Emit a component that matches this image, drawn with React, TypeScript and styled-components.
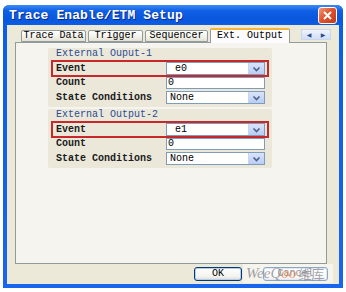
import React from "react";
import styled, { createGlobalStyle } from "styled-components";

const Global = createGlobalStyle`
  html, body { margin: 0; padding: 0; background: #ffffff; }
  body { width: 346px; height: 292px; overflow: hidden; font-family: "Liberation Mono", "Courier New", monospace; }
`;

const Page = styled.div`
  width: 346px;
  height: 292px;
  padding: 5px 3px 4px 3px;
  box-sizing: border-box;
  position: relative;
`;

const Window = styled.div`
  width: 340px;
  height: 283px;
  display: flex;
  flex-direction: column;
  background: linear-gradient(180deg, #0a5ee6 0%, #1866ec 100%);
  border-radius: 6px 6px 0 0;
  box-sizing: border-box;
  padding: 0 4px 4px 4px;
`;

const TitleBar = styled.div`
  height: 20px;
  display: flex;
  align-items: center;
  justify-content: space-between;
  padding: 0 2px 0 2px;
  background: linear-gradient(180deg, #3b8cf6 0%, #0f5fe4 30%, #0a57dc 70%, #0b5ee6 100%);
  margin: 0 -4px;
  padding: 0 6px 0 6px;
  border-radius: 6px 6px 0 0;
`;

const Title = styled.span`
  color: #ffffff;
  font-family: "Liberation Mono", monospace;
  font-weight: bold;
  font-size: 13px;
  letter-spacing: 0.1px;
  text-shadow: 1px 1px 0 #0a2a8a;
`;

const CloseBtn = styled.div`
  width: 17px;
  height: 15px;
  border: 1px solid #ffffff;
  border-radius: 3px;
  background: linear-gradient(135deg, #f09a7c 0%, #e0542e 45%, #c43a18 100%);
  display: flex;
  align-items: center;
  justify-content: center;
`;

const Body = styled.div`
  flex: 1;
  background: #ece9d8;
  display: flex;
  flex-direction: column;
  padding: 2px 8px 0 8px;
`;

const TabRow = styled.div`
  height: 15px;
  display: flex;
  align-items: flex-end;
  padding-left: 6px;
  position: relative;
`;

const Tab = styled.div<{ $active?: boolean; $w: number }>`
  width: ${(p) => p.$w}px;
  height: ${(p) => (p.$active ? 15 : 12)}px;
  box-sizing: border-box;
  margin-right: ${(p) => (p.$active ? 0 : 2)}px;
  border: 1px solid #919b9c;
  border-bottom: ${(p) => (p.$active ? "none" : "1px solid #919b9c")};
  border-top: ${(p) => (p.$active ? "2px solid #f7b53c" : "1px solid #919b9c")};
  border-radius: 2px 2px 0 0;
  background: ${(p) =>
    p.$active ? "#fcfcfe" : "linear-gradient(180deg, #ffffff 0%, #f2f1ea 60%, #e3e1d4 100%)"};
  font-size: 10px;
  line-height: ${(p) => (p.$active ? 11 : 10)}px;
  color: #000;
  text-align: center;
  white-space: nowrap;
  position: relative;
  z-index: ${(p) => (p.$active ? 2 : 1)};
  margin-bottom: ${(p) => (p.$active ? -1 : 0)}px;
`;

const Scroller = styled.div`
  position: absolute;
  right: 0;
  top: 2px;
  width: 30px;
  height: 11px;
  box-sizing: border-box;
  border: 1px solid #c9d6ef;
  background: linear-gradient(180deg, #eef3fd, #d2def6);
  display: flex;
  align-items: center;
  justify-content: space-around;
  font-size: 6px;
  color: #2d4d8c;
  font-family: "DejaVu Sans", sans-serif;
`;

const Pane = styled.div`
  width: 312px;
  height: 222px;
  box-sizing: border-box;
  border: 1px solid #919b9c;
  background: #f5f4ef;
  padding: 5px 0 0 32px;
  display: flex;
  flex-direction: column;
  gap: 2px;
`;

const Group = styled.div`
  width: 224px;
  height: 59px;
  box-sizing: border-box;
  background: #ebe8da;
  border-radius: 2px;
  padding: 0 3px;
  display: flex;
  flex-direction: column;
`;

const GroupHeading = styled.div`
  height: 12px;
  font-size: 10px;
  line-height: 12px;
  color: #2c4c94;
  padding-left: 5px;
`;

const RedBox = styled.div`
  border: 2px solid #c8282a;
  height: 17px;
  box-sizing: border-box;
  display: flex;
  align-items: center;
  padding: 0 2px 0 3px;
`;

const Row = styled.div<{ $top?: number }>`
  display: flex;
  align-items: center;
  padding: 0 4px 0 5px;
  margin-top: ${(p) => p.$top ?? 0}px;
`;

const Label = styled.div`
  width: 110px;
  font-size: 10px;
  font-weight: bold;
  color: #1a1a1a;
  line-height: 12px;
  white-space: nowrap;
`;

const Select = styled.div<{ $indent: number }>`
  width: 99px;
  height: 13px;
  box-sizing: border-box;
  border: 1px solid #7f9db9;
  background: #fff;
  display: flex;
  align-items: center;
  justify-content: space-between;
  padding-left: ${(p) => p.$indent}px;
  font-size: 10px;
  color: #000;
`;

const Input = styled.div`
  width: 99px;
  height: 12px;
  box-sizing: border-box;
  border: 1px solid #7f9db9;
  background: #fff;
  font-size: 10px;
  line-height: 10px;
  padding-left: 1px;
  color: #000;
`;

const DropBtn = styled.div`
  width: 15px;
  height: 11px;
  background: linear-gradient(180deg, #d9e4fb 0%, #b9cdf6 100%);
  border-left: 1px solid #c6d5f5;
  display: flex;
  align-items: center;
  justify-content: center;
`;

const Footer = styled.div`
  flex: 1;
  display: flex;
  align-items: center;
  padding-left: 179px;
  gap: 21px;
`;

const Button = styled.div<{ $w: number }>`
  width: ${(p) => p.$w}px;
  height: 14px;
  box-sizing: border-box;
  border: 1px solid #003c74;
  border-radius: 3px;
  background: linear-gradient(180deg, #ffffff 0%, #f3f3ef 70%, #dedbd0 100%);
  box-shadow: inset 0 0 0 1px #b8cbf0;
  font-size: 10px;
  line-height: 12px;
  text-align: center;
  color: #000;
`;

const Watermark = styled.div`
  position: absolute;
  left: 243px;
  top: 264px;
  width: 90px;
  height: 19px;
  background: rgba(255, 255, 255, 0.55);
  display: flex;
  align-items: center;
  padding-left: 3px;
  font-family: "Liberation Serif", serif;
  font-style: italic;
  font-size: 15px;
  color: rgba(130, 130, 140, 0.75);
  box-sizing: border-box;
`;

const Cn = styled.span`
  font-family: "Noto Sans CJK SC", sans-serif;
  font-style: normal;
  font-size: 13px;
  margin-left: 2px;
  color: rgba(140, 140, 150, 0.8);
`;

const Oo = styled.span`
  color: rgba(230, 120, 60, 0.75);
`;

const Chevron = () => (
  <svg width="9" height="6" viewBox="0 0 9 6">
    <path d="M1.5 1.5 L4.5 4.5 L7.5 1.5" stroke="#4d6185" strokeWidth="1.6" fill="none" />
  </svg>
);

const GroupBlock = ({ title, ev }: { title: string; ev: string }) => (
  <Group>
    <GroupHeading>{title}</GroupHeading>
    <RedBox>
      <Label>Event</Label>
      <Select $indent={8}>
        {ev}
        <DropBtn>
          <Chevron />
        </DropBtn>
      </Select>
    </RedBox>
    <Row>
      <Label>Count</Label>
      <Input>0</Input>
    </Row>
    <Row $top={2}>
      <Label>State Conditions</Label>
      <Select $indent={3}>
        None
        <DropBtn>
          <Chevron />
        </DropBtn>
      </Select>
    </Row>
  </Group>
);

export default function App() {
  return (
    <Page>
      <Global />
      <Window>
        <TitleBar>
          <Title>Trace Enable/ETM Setup</Title>
          <CloseBtn>
            <svg width="9" height="9" viewBox="0 0 9 9">
              <path d="M1 1 L8 8 M8 1 L1 8" stroke="#fff" strokeWidth="2" />
            </svg>
          </CloseBtn>
        </TitleBar>
        <Body>
          <TabRow>
            <Tab $w={65}>Trace Data</Tab>
            <Tab $w={55}>Trigger</Tab>
            <Tab $w={63}>Sequencer</Tab>
            <Tab $w={80} $active>
              Ext. Output
            </Tab>
            <Scroller>
              <span>◀</span>
              <span>▶</span>
            </Scroller>
          </TabRow>
          <Pane>
            <GroupBlock title="External Ouput-1" ev="e0" />
            <GroupBlock title="External Output-2" ev="e1" />
          </Pane>
          <Footer>
            <Button $w={48}>OK</Button>
            <Button $w={65}>Cancel</Button>
          </Footer>
        </Body>
      </Window>
      <Watermark>
        Wee<span>Q</span>
        <Oo>oo</Oo>
        <Cn>维库</Cn>
      </Watermark>
    </Page>
  );
}
